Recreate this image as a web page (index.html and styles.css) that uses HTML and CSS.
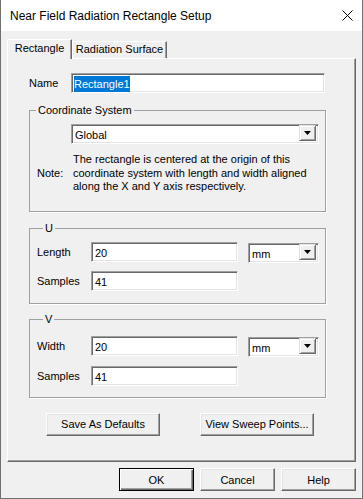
FILE: index.html
```html
<!DOCTYPE html>
<html lang="en">
<head>
    <meta charset="UTF-8">
    <title>Near Field Radiation Rectangle Setup</title>
    <link rel="stylesheet" href="styles.css">
</head>
<body>

    <div class="window">
        <div class="titlebar">
            <span class="title">Near Field Radiation Rectangle Setup</span>
            <svg class="close" width="11" height="11" viewBox="0 0 11 11">
                <path d="M0.5 0.5L10.5 10.5M10.5 0.5L0.5 10.5" stroke="#000" stroke-width="1" fill="none"/>
            </svg>
        </div>

        <div class="client">
            <div class="tabs">
                <div class="tab active">Rectangle</div>
                <div class="tab">Radiation Surface</div>
            </div>

            <div class="panel">
                <div class="name-row">
                    <span class="lbl-name">Name</span>
                    <div class="field field-name"><span class="sel">Rectangle1</span></div>
                </div>

                <fieldset class="group group-cs">
                    <legend>Coordinate System</legend>
                    <div class="combo combo-cs">
                        <span class="combo-text">Global</span>
                        <span class="combo-btn"><svg width="7" height="4" viewBox="0 0 7 4"><path d="M0 0h7L3.5 4z" fill="#000"/></svg></span>
                    </div>
                    <div class="note">
                        <span class="note-lbl">Note:</span>
                        <p class="note-text">The rectangle is centered at the origin of this<br>coordinate system with length and width aligned<br>along the X and Y axis respectively.</p>
                    </div>
                </fieldset>

                <fieldset class="group group-u">
                    <legend>U</legend>
                    <div class="row">
                        <span class="lbl">Length</span>
                        <div class="field field-num">20</div>
                        <div class="combo combo-unit">
                            <span class="combo-text">mm</span>
                            <span class="combo-btn"><svg width="7" height="4" viewBox="0 0 7 4"><path d="M0 0h7L3.5 4z" fill="#000"/></svg></span>
                        </div>
                    </div>
                    <div class="row row-second">
                        <span class="lbl">Samples</span>
                        <div class="field field-num">41</div>
                    </div>
                </fieldset>

                <fieldset class="group group-v">
                    <legend>V</legend>
                    <div class="row">
                        <span class="lbl">Width</span>
                        <div class="field field-num">20</div>
                        <div class="combo combo-unit">
                            <span class="combo-text">mm</span>
                            <span class="combo-btn"><svg width="7" height="4" viewBox="0 0 7 4"><path d="M0 0h7L3.5 4z" fill="#000"/></svg></span>
                        </div>
                    </div>
                    <div class="row row-second">
                        <span class="lbl">Samples</span>
                        <div class="field field-num">41</div>
                    </div>
                </fieldset>

                <div class="panel-buttons">
                    <button class="btn btn-wide">Save As Defaults</button>
                    <button class="btn btn-wide">View Sweep Points...</button>
                </div>
            </div>

            <div class="dialog-buttons">
                <button class="btn btn-default">OK</button>
                <button class="btn">Cancel</button>
                <button class="btn">Help</button>
            </div>
        </div>
    </div>

</body>
</html>
```

FILE: styles.css
```css
* {
    margin: 0;
    padding: 0;
    box-sizing: border-box;
}

body {
    font-family: 'Liberation Sans', Arial, sans-serif;
    font-size: 11px;
    color: #000;
    background: #f0f0f0;
}

.window {
    width: 363px;
    height: 499px;
    border: 1px solid #707070;
    border-top: none;
    background: #f0f0f0;
}

.titlebar {
    height: 31px;
    background: #fff;
    display: flex;
    align-items: center;
    justify-content: space-between;
    padding: 0 9px 0 9px;
}

.title {
    font-size: 12px;
}

.close {
    display: block;
    margin-top: 0;
}

.client {
    padding: 8px 6px 0 6px;
}

/* tabs */
.tabs {
    display: flex;
    align-items: flex-end;
}

.tab {
    position: relative;
    height: 17px;
    line-height: 15px;
    text-align: center;
    background: #f0f0f0;
    border: 1px solid #fff;
    border-right-color: #696969;
    border-bottom: none;
    box-shadow: inset -1px 0 0 #a0a0a0;
    width: 95px;
}

.tab.active {
    width: 65px;
    height: 20px;
    line-height: 17px;
    margin-bottom: -1px;
    z-index: 1;
}

.panel {
    height: 404px;
    border: 1px solid #fff;
    border-right-color: #696969;
    border-bottom-color: #696969;
    box-shadow: inset -1px -1px 0 #a0a0a0;
    padding: 14px 0 0 21px;
}

/* sunken fields */
.field,
.combo {
    height: 20px;
    background: #fff;
    border: 1px solid;
    border-color: #a0a0a0 #fff #fff #a0a0a0;
    box-shadow: inset 1px 1px 0 #696969, inset -1px -1px 0 #e3e3e3;
    padding: 2px 0 0 3px;
    line-height: 16px;
    white-space: nowrap;
}

.name-row {
    display: flex;
    align-items: center;
    height: 20px;
}

.lbl-name {
    width: 42px;
}

.field-name {
    width: 254px;
    padding-left: 2px;
}

.sel {
    display: inline-block;
    background: #0078d7;
    color: #fff;
    height: 16px;
}

/* group boxes */
.group {
    width: 297px;
    border: 1px solid #a0a0a0;
    box-shadow: 1px 1px 0 #fff;
    min-width: 0;
}

.group legend {
    margin-left: 6px;
    padding: 0 2px;
    line-height: 13px;
}

.group-cs {
    margin-top: 11px;
    padding-bottom: 17px;
}

.combo {
    display: flex;
    justify-content: space-between;
    padding-right: 2px;
}

.combo-btn {
    width: 17px;
    height: 16px;
    margin-top: -2px;
    display: flex;
    align-items: center;
    justify-content: center;
    background: #f0f0f0;
    border: 1px solid;
    border-color: #e3e3e3 #696969 #696969 #e3e3e3;
    box-shadow: inset 1px 1px 0 #fff, inset -1px -1px 0 #a0a0a0;
}

.combo-cs {
    width: 248px;
    margin: 7px 0 0 41px;
}

.note {
    display: flex;
    align-items: center;
    margin-top: 9px;
    padding-left: 7px;
}

.note-lbl {
    width: 36px;
}

.note-text {
    line-height: 13.5px;
}

.group-u {
    margin-top: 10px;
    padding: 7px 0 12px 7px;
}

.group-v {
    margin-top: 9px;
    padding: 10px 0 11px 7px;
}

.row {
    display: flex;
    align-items: flex-start;
}

.row-second {
    margin-top: 8px;
}

.group-v .row-second {
    margin-top: 9px;
}

.lbl {
    width: 54px;
    line-height: 20px;
}

.field-num {
    width: 147px;
}

.combo-unit {
    width: 71px;
    margin: 1px 0 0 10px;
}

/* buttons */
.btn {
    font-family: inherit;
    font-size: 11px;
    color: #000;
    height: 23px;
    width: 75px;
    background: #f0f0f0;
    border: 1px solid;
    border-color: #fff #696969 #696969 #fff;
    box-shadow: inset -1px -1px 0 #a0a0a0, inset 1px 1px 0 #e3e3e3;
}

.btn-wide {
    width: 114px;
}

.btn-default {
    border-color: #000;
    box-shadow: inset 1px 1px 0 #fff, inset -1px -1px 0 #696969, inset -2px -2px 0 #a0a0a0;
}

.panel-buttons {
    display: flex;
    gap: 40px;
    margin: 15px 0 0 17px;
}

.dialog-buttons {
    display: flex;
    justify-content: flex-end;
    gap: 6px;
    margin-top: 6px;
}
```
